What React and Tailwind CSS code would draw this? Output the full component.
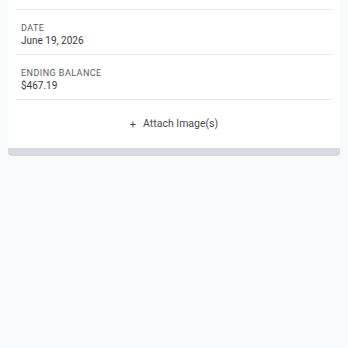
export default function App() {
  const rows = [
    { label: 'DATE', value: 'June 19, 2026' },
    { label: 'ENDING BALANCE', value: '$467.19' },
  ];

  return (
    <div className="min-h-[348px] bg-[#f8f9fa] px-2" style={{ fontFamily: 'Roboto, "Noto Sans", sans-serif' }}>
      <div className="bg-white rounded-b-[4px] overflow-hidden">
        <div className="px-2">
          <div className="h-[10px] border-b border-[#e8e9eb]" />
          {rows.map((row) => (
            <div key={row.label} className="border-b border-[#e8e9eb] pl-[5px] pt-[13px] pb-[7px]">
              <p className="text-[9px] leading-[11px] tracking-[0.05em] text-[#5a5d63]">{row.label}</p>
              <p className="text-[10px] leading-[13px] text-[#3a3c41]">{row.value}</p>
            </div>
          ))}
          <div className="h-[48px] flex items-center justify-center gap-[7px] text-[#4a4c52]">
            <span className="text-[11px] leading-none">+</span>
            <span className="text-[10.5px] leading-none">Attach Image(s)</span>
          </div>
        </div>
        <div className="h-2 bg-[#d6dbe2]" />
      </div>
    </div>
  );
}
